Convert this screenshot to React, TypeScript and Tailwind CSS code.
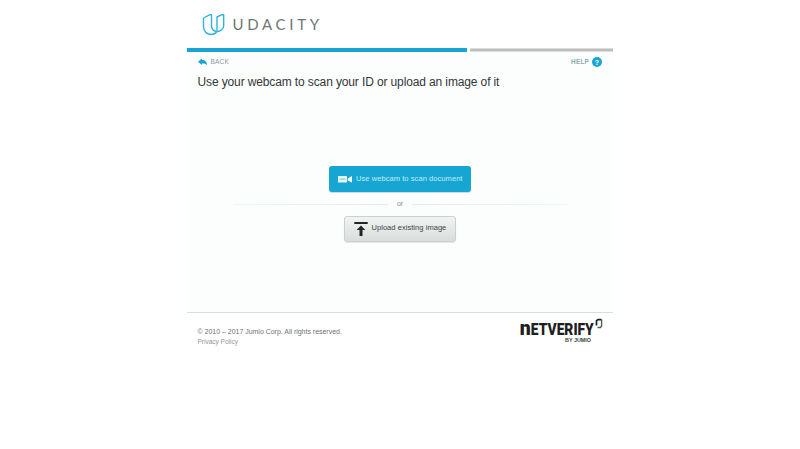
function UdacityMark() {
  return (
    <svg className="h-[24px] w-[24px]" viewBox="0 0 24 24" fill="none" stroke="#2fb3da" strokeWidth="1.4" strokeLinejoin="round">
      <path d="M1.500 5 L8 1.700 H9.500 V13 C9.500 16 11 17.500 14 18.500 M1.500 5 V13.500 C1.500 18.500 5 21.500 9.500 21.500 C12 21.500 13.500 20.500 15 18.500" />
      <path d="M15 18.500 V4 L20 1.700 H21.700 V12.500 C21.700 16 18.500 18.500 15 18.500" />
    </svg>
  );
}

function NetverifyLogo() {
  return (
    <svg className="h-[30px] w-[86px] overflow-visible" viewBox="0 0 86 30" fill="#202020">
      <text x="0.700" y="18" fontFamily="Roboto, sans-serif" fontWeight="900" fontSize="20.500" textLength="11" lengthAdjust="spacingAndGlyphs">n</text>
      <text x="11.800" y="18" fontFamily="Roboto, sans-serif" fontWeight="900" fontSize="16.300" textLength="63" lengthAdjust="spacingAndGlyphs">ETVERIFY</text>
      <path d="M77.500 8.500 V3.600 L79 2.600 H82.500" fill="none" stroke="#202020" strokeWidth="1.700" />
      <path d="M82.600 2.600 V9 L81.500 10.500 H78.500" fill="none" stroke="#555a5a" strokeWidth="1.400" />
      <text x="46" y="25" fontFamily="Liberation Sans, sans-serif" fontWeight="700" fontSize="5.500" textLength="26" lengthAdjust="spacingAndGlyphs" fill="#3b3e3e">BY JUMIO</text>
    </svg>
  );
}

export default function App() {
  return (
    <div className="h-[449px] w-[800px] overflow-hidden bg-white font-['Liberation_Sans',Arial,sans-serif]">
      <div className="ml-[187px] w-[426px]">
        <header className="flex h-12 items-start pt-[13px] pl-[15px]">
          <UdacityMark />
          <span className="ml-[6.500px] font-['Lato','Open_Sans',sans-serif] text-[15px] leading-[22px] tracking-[3.7px] text-[#707477]">UDACITY</span>
        </header>
        <div className="flex h-[4px] gap-[3px]">
          <div className="h-[4px] w-[280px] bg-[#17a6d3]" />
          <div className="h-[4px] flex-1 border-y border-[#dcdcdc] bg-[#bdbdbd]" />
        </div>
        <main className="h-[261px] border-b border-[#d3dfdf] bg-[#fbfefd]">
          <div className="flex h-5 items-center justify-between pr-[11px] pl-[11px] text-[6.5px]">
            <a className="flex items-center text-[#8e9a9d]">
              <svg className="mr-[3.500px] h-[8px] w-[9px]" viewBox="0 0 9 8" fill="#17a6d3">
                <path d="M0 3.700 L4 0.500 V2 C7.500 2 9 4 9 7.500 C8 5.800 6.500 5.500 4 5.500 V7 Z" />
              </svg>
              <span className="tracking-[0.2px]">BACK</span>
            </a>
            <a className="flex items-center text-[#8fa9af]">
              <span className="font-bold tracking-[0.15px]">HELP</span>
              <span className="ml-[3px] flex h-[10px] w-[10px] items-center justify-center rounded-full bg-[#17a6d3] text-[7px] leading-none font-bold text-white">?</span>
            </a>
          </div>
          <h1 className="pl-[10.500px] text-[12px] leading-[20px] tracking-[-0.125px] whitespace-nowrap text-[#333637]">Use your webcam to scan your ID or upload an image of it</h1>
          <div className="flex flex-col items-center pt-[74px]">
            <button className="flex h-[26px] w-[142px] items-center rounded-[3px] bg-[#17a6d3] pl-[9px] text-[7.5px] tracking-[0.07px] text-[#c4eaf5] shadow-[0_1px_1px_#ccd9db]">
              <svg className="mr-[4px] h-[8px] w-[14px]" viewBox="0 0 14 8">
                <rect y="1" width="9" height="6.500" rx="0.500" fill="#e4f6fa" />
                <path d="M9.800 3.500 L14 1 V7.500 L9.800 5.500 Z" fill="#fff" />
                <path d="M1.500 4.200 H7.500" stroke="#6bc4df" strokeWidth="1" />
              </svg>
              <span className="whitespace-nowrap">Use webcam to scan document</span>
            </button>
            <div className="flex h-[24px] w-[333px] items-center gap-[9px] text-[7px] text-[#8b8f90]">
              <div className="h-px flex-1 bg-linear-to-r from-[#f0f6f6] to-[#e0eded]" />
              <span>or</span>
              <div className="h-px flex-1 bg-linear-to-l from-[#f0f6f6] to-[#e0eded]" />
            </div>
            <button className="flex h-[26px] w-[112px] items-center rounded-[3px] border border-[#cbd1d0] bg-linear-to-b from-[#f1f4f3] to-[#d9dddc] pl-[9px] text-[7.5px] tracking-[0.05px] text-[#414546] shadow-[0_1px_1px_#e0e5e4]">
              <svg className="mr-[3.500px] h-[14px] w-[14px]" viewBox="0 0 14 14" fill="#242727">
                <path d="M0.300 0 H13.700 V2 H0.300 Z M7 3.500 L11.300 8 H8.500 V14 H5.500 V8 H2.700 Z" />
              </svg>
              <span className="pb-[2px] whitespace-nowrap">Upload existing image</span>
            </button>
          </div>
        </main>
        <footer className="flex justify-between pt-[4px] pr-[8px] pl-[10.500px]">
          <div className="pt-[10px] text-[6.500px] leading-[10px]">
            <p className="text-[7px] tracking-[-0.02px] text-[#6f7374]">© 2010 – 2017 Jumio Corp. All rights reserved.</p>
            <p className="text-[#929697]">Privacy Policy</p>
          </div>
          <NetverifyLogo />
        </footer>
      </div>
    </div>
  );
}
